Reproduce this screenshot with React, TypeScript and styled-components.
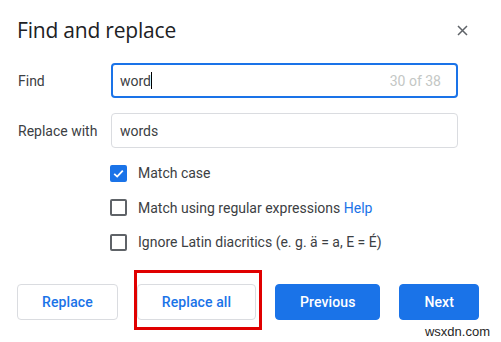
import React from "react";
import styled, { createGlobalStyle } from "styled-components";

const GlobalStyle = createGlobalStyle`
  html, body {
    margin: 0;
    padding: 0;
    background: #ffffff;
  }
  body {
    font-family: Roboto, "Liberation Sans", Arial, sans-serif;
    color: #3c4043;
  }
`;

export default function App() {
  return (
    <>
      <GlobalStyle />
      <Dialog>
        <Header>
          <Title>Find and replace</Title>
          <CloseButton aria-label="Close">
            <svg width="11" height="11" viewBox="0 0 11 11">
              <path d="M1 1 L10 10 M10 1 L1 10" stroke="#5f6368" strokeWidth="1.5" fill="none" />
            </svg>
          </CloseButton>
        </Header>

        <FieldRow>
          <Label>Find</Label>
          <InputBox $focused>
            <InputText>
              word
              <Caret />
            </InputText>
            <Count>30 of 38</Count>
          </InputBox>
        </FieldRow>

        <FieldRow $top={15}>
          <Label>Replace with</Label>
          <InputBox>
            <InputText>words</InputText>
          </InputBox>
        </FieldRow>

        <Options>
          <OptionRow>
            <Checkbox $checked>
              <svg width="13" height="13" viewBox="0 0 13 13">
                <path d="M2.2 6.8 L5.2 9.6 L10.8 3.6" stroke="#ffffff" strokeWidth="1.8" fill="none" />
              </svg>
            </Checkbox>
            <OptionText>Match case</OptionText>
          </OptionRow>
          <OptionRow>
            <Checkbox />
            <OptionText>
              Match using regular expressions <HelpLink>Help</HelpLink>
            </OptionText>
          </OptionRow>
          <OptionRow>
            <Checkbox />
            <OptionText>Ignore Latin diacritics (e. g. ä = a, E = É)</OptionText>
          </OptionRow>
        </Options>

        <Buttons>
          <Button>Replace</Button>
          <Highlight>
            <Button>Replace all</Button>
            <RedFrame />
          </Highlight>
          <Button $primary>Previous</Button>
          <Button $primary>Next</Button>
        </Buttons>

        <Watermark>wsxdn.com</Watermark>
      </Dialog>
    </>
  );
}

const Dialog = styled.div`
  position: relative;
  width: 501px;
  height: 342px;
  box-sizing: border-box;
  padding: 0 22px 0 17px;
  display: flex;
  flex-direction: column;
  background: #ffffff;
`;

const Header = styled.div`
  display: flex;
  align-items: center;
  justify-content: space-between;
  padding-top: 18px;
  height: 24px;
`;

const Title = styled.div`
  font-family: "Open Sans", Roboto, sans-serif;
  font-size: 21px;
  line-height: 24px;
  color: #202124;
  letter-spacing: -0.2px;
`;

const CloseButton = styled.div`
  display: flex;
  align-items: center;
  justify-content: center;
  width: 11px;
  height: 11px;
  margin-right: 11px;
`;

const FieldRow = styled.div<{ $top?: number }>`
  display: flex;
  align-items: center;
  margin-top: ${(p) => p.$top ?? 21}px;
  height: 35px;
`;

const Label = styled.div`
  width: 93px;
  font-size: 14px;
  color: #3c4043;
  padding-left: 1px;
`;

const InputBox = styled.div<{ $focused?: boolean }>`
  box-sizing: border-box;
  width: 347px;
  height: 35px;
  display: flex;
  align-items: center;
  justify-content: space-between;
  border: ${(p) => (p.$focused ? "2px solid #1a73e8" : "1px solid #dadce0")};
  border-radius: 4px;
  padding: ${(p) => (p.$focused ? "0 15px 0 7px" : "0 16px 0 8px")};
`;

const InputText = styled.span`
  display: flex;
  align-items: center;
  font-size: 14px;
  color: #3c4043;
`;

const Caret = styled.span`
  display: inline-block;
  width: 1px;
  height: 17px;
  background: #000000;
`;

const Count = styled.span`
  font-size: 14px;
  color: #c4c7c5;
`;

const Options = styled.div`
  display: flex;
  flex-direction: column;
  margin-top: 8px;
  padding-left: 93px;
`;

const OptionRow = styled.div`
  display: flex;
  align-items: center;
  height: 34.5px;
`;

const Checkbox = styled.div<{ $checked?: boolean }>`
  box-sizing: border-box;
  width: 17px;
  height: 17px;
  border-radius: 2px;
  display: flex;
  align-items: center;
  justify-content: center;
  border: 2px solid ${(p) => (p.$checked ? "#1a73e8" : "#5f6368")};
  background: ${(p) => (p.$checked ? "#1a73e8" : "#ffffff")};
`;

const OptionText = styled.span`
  margin-left: 11px;
  font-size: 14px;
  color: #3c4043;
`;

const HelpLink = styled.span`
  color: #1a73e8;
`;

const Buttons = styled.div`
  display: flex;
  align-items: center;
  justify-content: space-between;
  margin-top: 24px;
`;

const Button = styled.div<{ $primary?: boolean }>`
  box-sizing: border-box;
  height: 36px;
  display: flex;
  align-items: center;
  justify-content: center;
  padding: 0 24px;
  border-radius: 4px;
  font-size: 14px;
  font-weight: 500;
  letter-spacing: 0.1px;
  border: 1px solid ${(p) => (p.$primary ? "#1a73e8" : "#dadce0")};
  background: ${(p) => (p.$primary ? "#1a73e8" : "#ffffff")};
  color: ${(p) => (p.$primary ? "#ffffff" : "#1a73e8")};
`;

const Highlight = styled.div`
  position: relative;
`;

const RedFrame = styled.div`
  position: absolute;
  left: -3px;
  right: -6px;
  top: -14px;
  bottom: -10px;
  border: 3px solid #e00000;
  pointer-events: none;
`;

const Watermark = styled.div`
  position: absolute;
  right: 11px;
  bottom: 3px;
  font-family: "Liberation Sans", Arial, sans-serif;
  font-size: 13px;
  color: #1f1f1f;
`;
